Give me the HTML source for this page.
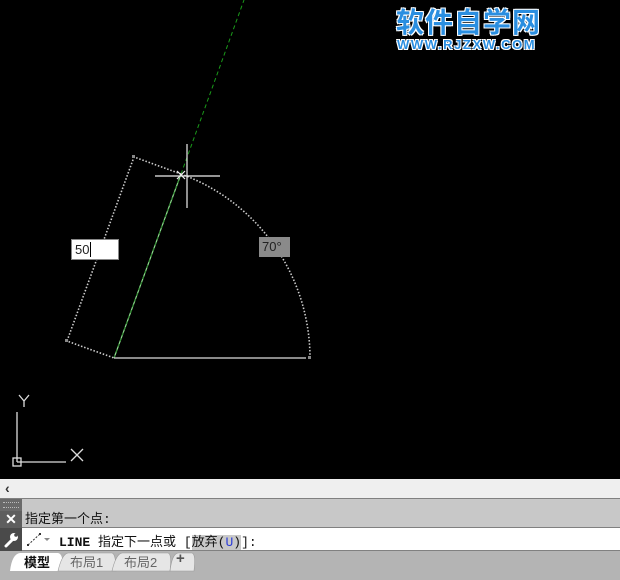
<!DOCTYPE html>
<html><head><meta charset="utf-8"><style>
body{margin:0;width:620px;height:580px;overflow:hidden;background:#000;position:relative;font-family:"Liberation Sans","Noto Sans CJK SC",sans-serif}
.a{position:absolute}
.cjk{font-family:"Liberation Mono","Noto Sans CJK SC",monospace}
</style></head><body>
<svg class="a" style="left:0;top:0" width="620" height="480">
<line x1="181" y1="174" x2="244" y2="0" stroke="#1a9a1a" stroke-width="1" stroke-dasharray="4,3"/>
<line x1="114" y1="358" x2="181" y2="174" stroke="#8fdc8f" stroke-width="1.2"/>
<line x1="114" y1="358" x2="181" y2="174" stroke="#2a8a2a" stroke-width="1" stroke-dasharray="3,3"/>
<g stroke="#ccc" stroke-width="1.6" fill="none" stroke-dasharray="1.5,1.8">
<polyline points="181,174 134,157 67,341 114,358"/>
<path d="M310 358 A196 196 0 0 0 181 174"/>
</g>
<line x1="114" y1="358" x2="306" y2="358" stroke="#ddd" stroke-width="1.2"/>
<rect x="132" y="155" width="3" height="3" fill="#888"/>
<rect x="65" y="339" width="3" height="3" fill="#888"/>
<rect x="308" y="356" width="3" height="3" fill="#888"/>
<g stroke="#eee" stroke-width="1.2">
<line x1="155" y1="176" x2="220" y2="176"/><line x1="187" y1="144" x2="187" y2="208"/>
<line x1="177" y1="171" x2="185" y2="179"/><line x1="185" y1="171" x2="177" y2="179"/>
</g>
<g stroke="#ddd" stroke-width="1.3" fill="none">
<line x1="17" y1="412" x2="17" y2="462"/><line x1="17" y1="462" x2="66" y2="462"/>
<rect x="13" y="458" width="8" height="8"/>
<path d="M19 395 L24 401 L29 395 M24 401 V407"/>
<path d="M71 449 L83 461 M83 449 L71 461"/>
</g>
</svg>
<div class="a" style="left:71px;top:239px;background:#fff;border:1px solid #888;font-size:13px;line-height:19px;padding-left:3px;box-sizing:border-box;width:48px;height:21px;color:#222">50<span style="border-left:1px solid #000;margin-left:1px"></span></div>
<div class="a" style="left:259px;top:237px;width:31px;height:20px;background:#8a8a8a;color:#222;font-size:13px;line-height:20px;padding-left:3px;box-sizing:border-box">70°</div>
<div class="a" style="left:396px;top:5px;color:#2a8ee0;font-size:28px;font-weight:bold;letter-spacing:1px;line-height:32px;font-family:'Noto Sans CJK SC',sans-serif;text-shadow:1px 1px 0 #fff,-1px -1px 0 #fff,1px -1px 0 #fff,-1px 1px 0 #fff">软件自学网</div>
<div class="a" style="left:397px;top:37px;color:#2a8ee0;font-size:13px;font-weight:bold;letter-spacing:1.6px;text-shadow:1px 1px 0 #fff,-1px -1px 0 #fff,1px -1px 0 #fff,-1px 1px 0 #fff">WWW.RJZXW.COM</div>
<div class="a" style="left:0;top:479px;width:620px;height:19px;background:#efefef;border-bottom:1px solid #808080"></div>
<div class="a" style="left:5px;top:480px;font-size:14px;font-weight:bold;color:#333">&lsaquo;</div>
<div class="a" style="left:0;top:499px;width:620px;height:28px;background:#c8c8c8;border-bottom:1px solid #808080"></div>
<div class="a" style="left:0;top:528px;width:620px;height:22px;background:#fff;border-bottom:1px solid #808080"></div>
<div class="a" style="left:0;top:551px;width:620px;height:29px;background:#b4b4b4"></div>
<div class="a" style="left:0;top:499px;width:22px;height:12px;background:#6a6a6a"></div>
<div class="a" style="left:3px;top:502px;width:16px;height:4px;border-top:1px dotted #bbb;border-bottom:1px dotted #bbb"></div>
<div class="a" style="left:0;top:511px;width:22px;height:17px;background:#5e5e5e;color:#fff;font-size:14px;font-weight:bold;text-align:center;line-height:17px">✕</div>
<div class="a" style="left:0;top:528px;width:22px;height:23px;background:#4a4a4a"></div>
<svg class="a" style="left:3px;top:531px" width="17" height="17"><path d="M3 15 L9 9" stroke="#fff" stroke-width="3" stroke-linecap="round"/><circle cx="11" cy="6" r="4" fill="#fff"/><circle cx="13" cy="4" r="1.8" fill="#4a4a4a"/></svg>
<div class="a cjk" style="left:25px;top:508px;font-size:13px;color:#111">指定第一个点:</div>
<svg class="a" style="left:26px;top:531px" width="30" height="16"><path d="M2 14 L14 3" stroke="#333" stroke-dasharray="2,1.5"/><rect x="1" y="13" width="2" height="2" fill="#333"/><rect x="13" y="2" width="2" height="2" fill="#333"/><path d="M18 7 L24 7 L21 10Z" fill="#888"/></svg>
<div class="a cjk" style="left:59px;top:531px;font-size:13px;color:#111;white-space:pre"><b>LINE</b> 指定下一点或 [<span style="background:#c8c8c8">放弃(<span style="color:#2a3bd8">U</span>)</span>]:</div>
<svg class="a" style="left:0;top:551px" width="200" height="29">
<path d="M10 20 Q12 3 20 2 H58 Q64 3 62 20Z" fill="#fff"/>
<path d="M58 20 Q62 3 68 2 H112 Q116 3 116 20Z" fill="#e6e6e6" stroke="#999" stroke-width="0.6"/>
<path d="M112 20 Q116 3 122 2 H168 Q172 3 170 20Z" fill="#e6e6e6" stroke="#999" stroke-width="0.6"/>
<path d="M170 20 Q172 3 178 2 H192 Q196 3 194 20Z" fill="#e6e6e6" stroke="#999" stroke-width="0.6"/>
</svg>
<div class="a" style="left:24px;top:552px;font-size:13px;font-weight:bold;color:#111;font-family:'Noto Sans CJK SC',sans-serif">模型</div>
<div class="a" style="left:70px;top:552px;font-size:13px;color:#666;font-family:'Liberation Sans','Noto Sans CJK SC',sans-serif">布局1</div>
<div class="a" style="left:124px;top:552px;font-size:13px;color:#666;font-family:'Liberation Sans','Noto Sans CJK SC',sans-serif">布局2</div>
<div class="a" style="left:176px;top:550px;font-size:15px;font-weight:bold;color:#555">+</div>
</body></html>
